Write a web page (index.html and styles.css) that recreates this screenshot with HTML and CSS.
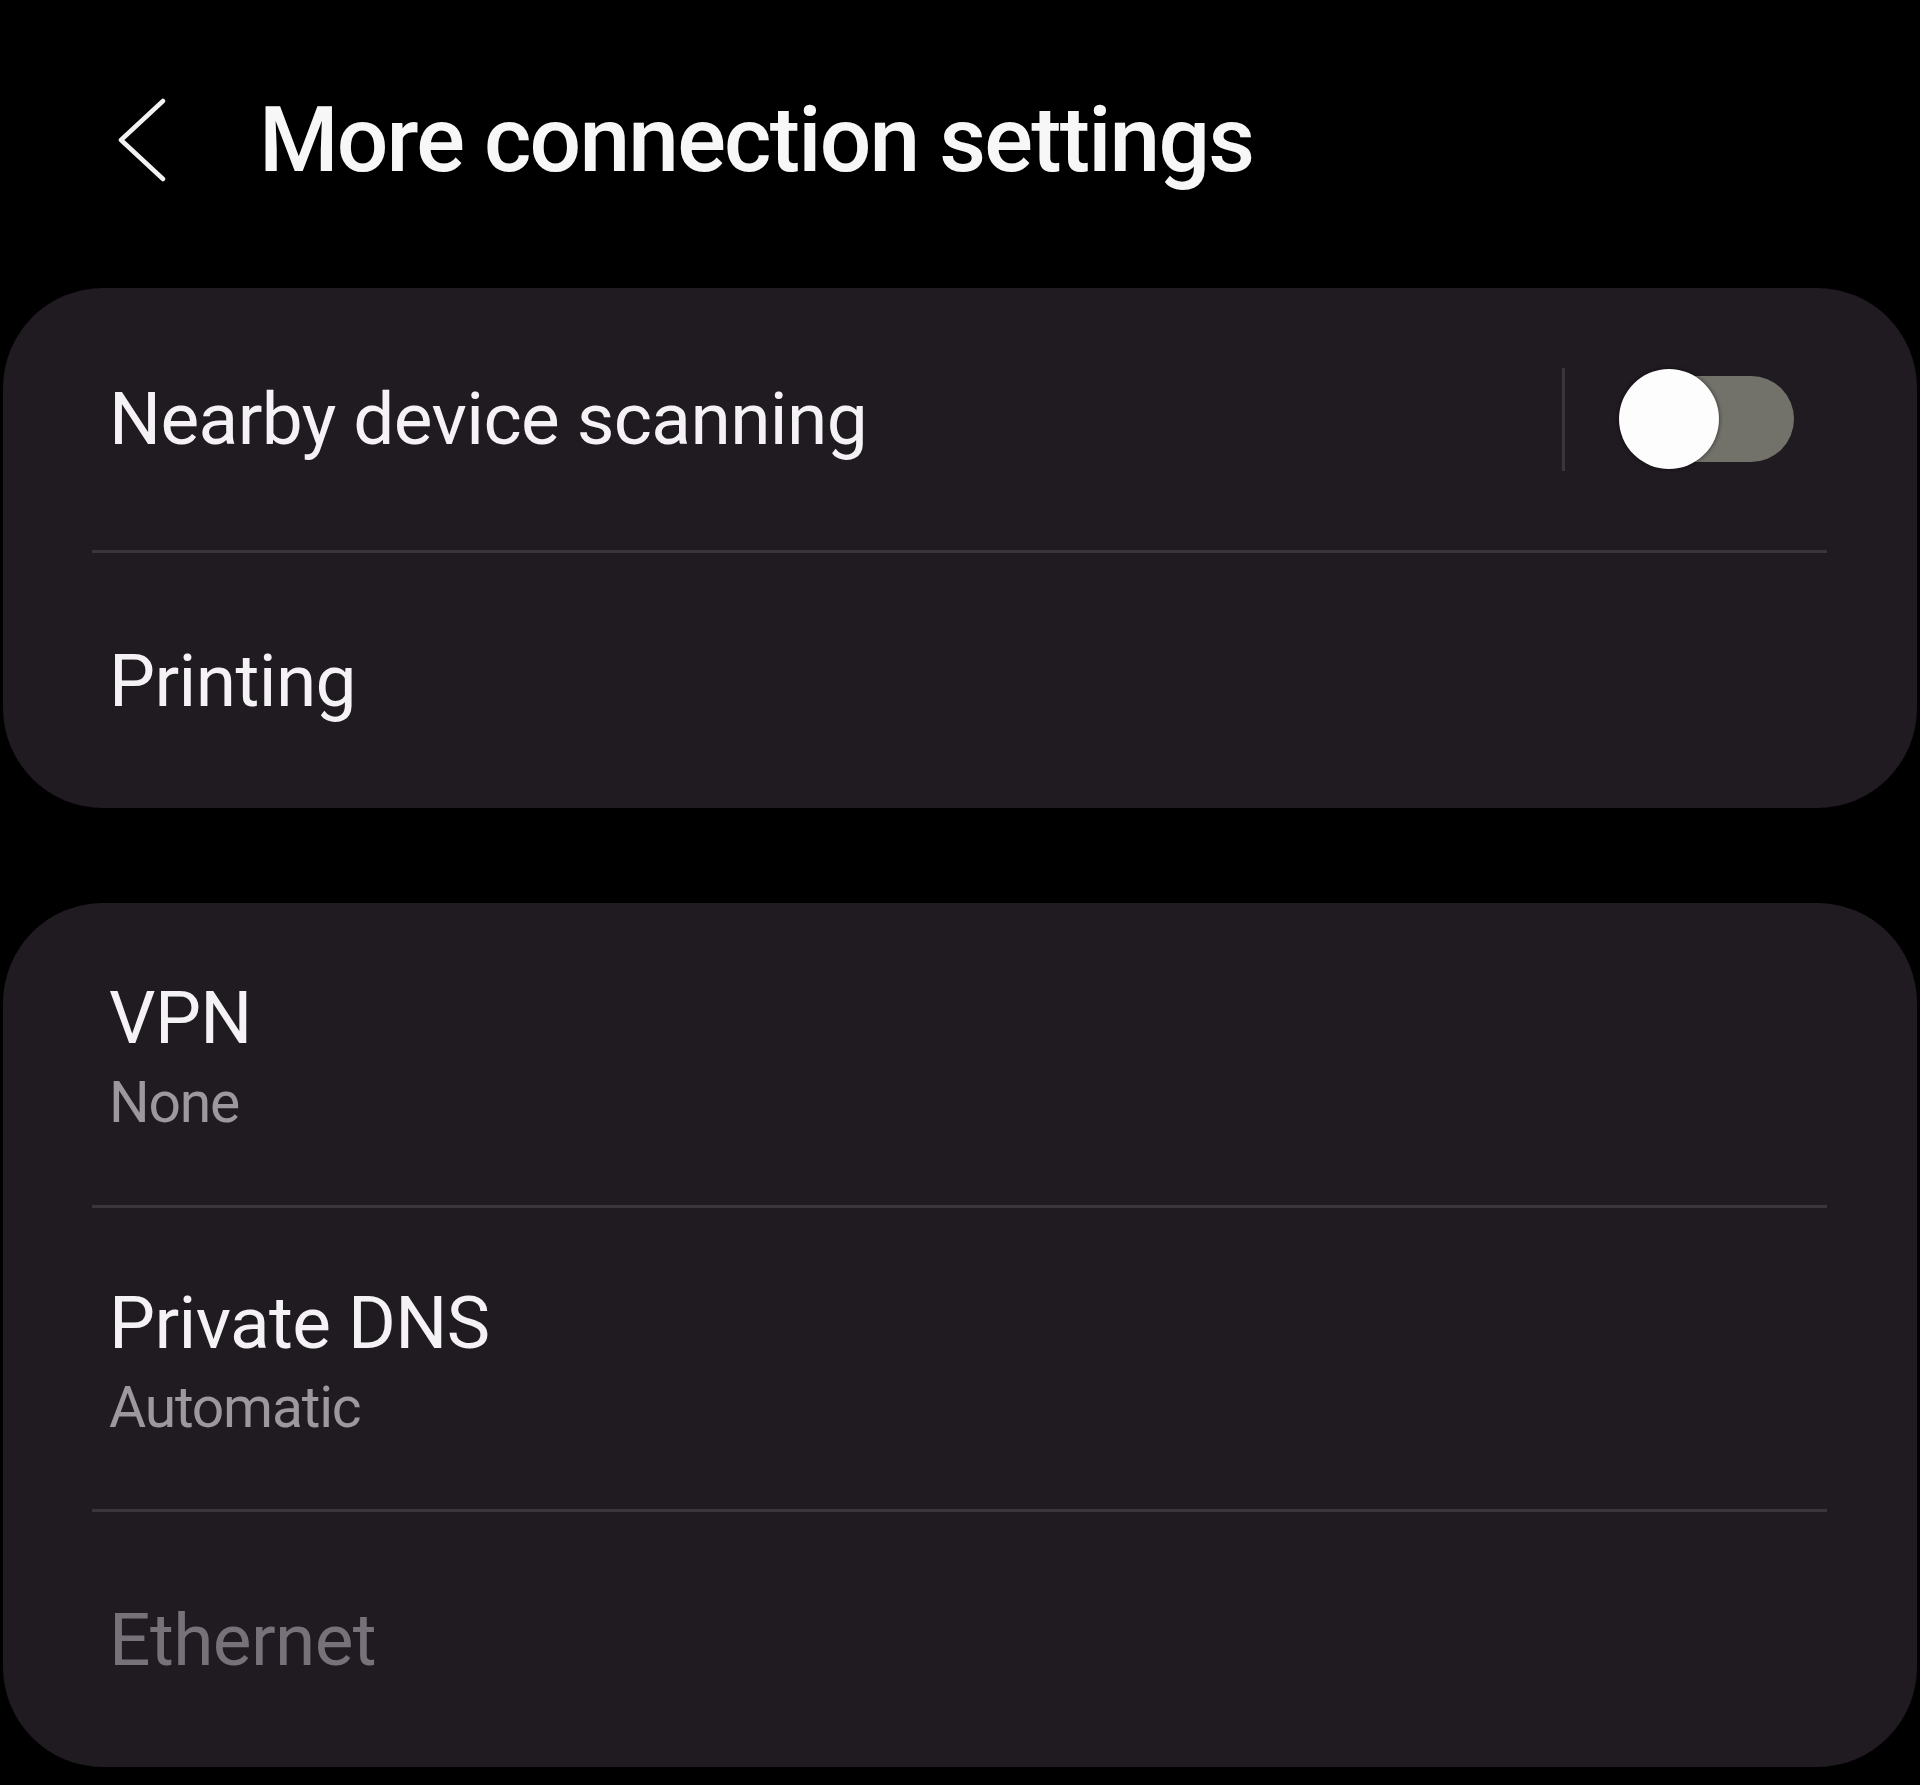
FILE: index.html
```html
<!DOCTYPE html>
<html lang="en">
<head>
<meta charset="utf-8">
<title>More connection settings</title>
<link rel="stylesheet" href="styles.css">
</head>
<body>
<div class="screen">
  <header class="header">
    <svg class="back" width="50" height="84" viewBox="0 0 50 84" aria-hidden="true">
      <polyline points="46,3 4,42 46,81" fill="none" stroke="#f2f2f2" stroke-width="4.5" stroke-linecap="round" stroke-linejoin="round"/>
    </svg>
    <h1 class="title">More connection settings</h1>
  </header>

  <section class="card card-1">
    <div class="row row-switch">
      <span class="label">Nearby device scanning</span>
      <div class="switch-wrap">
        <span class="vline"></span>
        <span class="switch"><span class="track"></span><span class="thumb"></span></span>
      </div>
    </div>
    <div class="divider"></div>
    <div class="row row-short">
      <span class="label">Printing</span>
    </div>
  </section>

  <section class="card card-2">
    <div class="row row-tall">
      <div class="stack">
        <span class="label">VPN</span>
        <span class="sub">None</span>
      </div>
    </div>
    <div class="divider"></div>
    <div class="row row-tall2">
      <div class="stack">
        <span class="label">Private DNS</span>
        <span class="sub">Automatic</span>
      </div>
    </div>
    <div class="divider"></div>
    <div class="row row-short">
      <span class="label disabled">Ethernet</span>
    </div>
  </section>
</div>
</body>
</html>
```

FILE: styles.css
```css
html, body {
  margin: 0;
  padding: 0;
  background: #000;
}
body {
  font-family: Roboto, "Noto Sans", "Liberation Sans", sans-serif;
  color: #f4f2f4;
}
.screen {
  width: 1920px;
  height: 1785px;
  display: flex;
  flex-direction: column;
  box-sizing: border-box;
  padding: 0 3px;
}
.header {
  height: 276px;
  margin-bottom: 12px;
  display: flex;
  align-items: center;
  padding-left: 114px;
}
.back {
  display: block;
  flex: none;
  margin-top: 4px;
}
.title {
  margin: 4px 0 0 92px;
  font-size: 91px;
  font-weight: 500;
  line-height: 1;
  letter-spacing: -1.8px;
  color: #f7f7f7;
}
.card {
  background: #201b21;
  border-radius: 100px;
  display: flex;
  flex-direction: column;
}
.card-1 {
  height: 520px;
  margin-bottom: 95px;
}
.card-2 {
  height: 864px;
}
.row {
  display: flex;
  align-items: center;
  justify-content: space-between;
  padding: 0 123px 0 106px;
}
.row-switch { height: 262px; }
.row-short { height: 255px; }
.row-tall { height: 302px; }
.row-tall2 { height: 301px; }
.divider {
  height: 3px;
  margin: 0 90px 0 89px;
  background: #3a353b;
  flex: none;
}
.label {
  font-size: 73px;
  line-height: 90px;
  font-weight: 400;
  letter-spacing: -0.6px;
  color: #f4f2f4;
}
.label.disabled {
  color: #77727a;
}
.stack {
  display: flex;
  flex-direction: column;
  padding-top: 8px;
}
.sub {
  font-size: 57px;
  line-height: 80px;
  letter-spacing: -1.2px;
  color: #9d989e;
}
.switch-wrap {
  display: flex;
  align-items: center;
  gap: 54px;
}
.vline {
  width: 3px;
  height: 103px;
  background: #3a353b;
  display: block;
}
.switch {
  position: relative;
  width: 175px;
  height: 100px;
  display: block;
}
.track {
  position: absolute;
  left: 21px;
  top: 7px;
  width: 154px;
  height: 86px;
  border-radius: 43px;
  background: #72716a;
}
.thumb {
  position: absolute;
  left: 0;
  top: 0;
  width: 100px;
  height: 100px;
  border-radius: 50%;
  background: #fdfdfd;
  box-shadow: 0 0 4px rgba(0,0,0,0.6);
}
```
